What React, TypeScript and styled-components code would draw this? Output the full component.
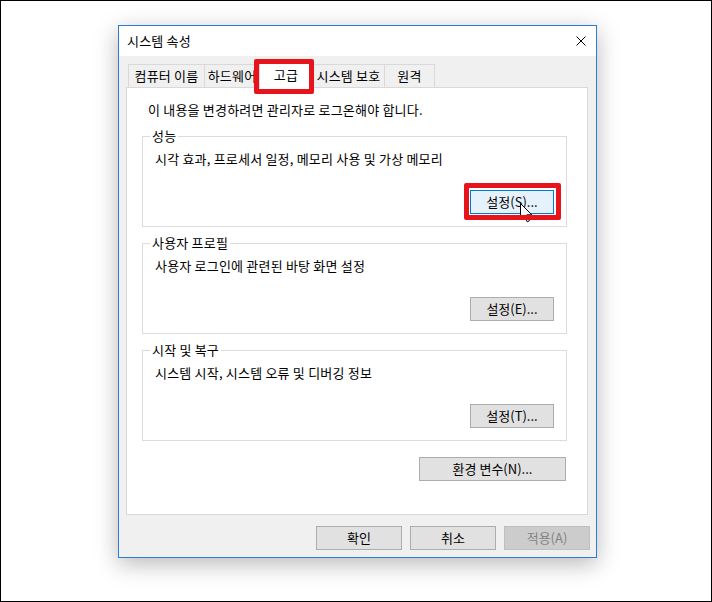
import React from "react";
import styled, { createGlobalStyle, css } from "styled-components";

const GlobalStyle = createGlobalStyle`
  html, body { margin: 0; padding: 0; background: #fff; }
  body {
    font-family: "Noto Sans CJK KR", "Noto Sans", sans-serif;
    font-size: 13px;
    letter-spacing: 0.2px;
    color: #000;
  }
`;

const Stage = styled.div`
  width: 712px;
  height: 602px;
  box-sizing: border-box;
  border: 1px solid #000;
  background: #fff;
  padding: 24px 0 0 117px;
  display: flex;
  align-items: flex-start;
`;

const Window = styled.div`
  width: 479px;
  height: 533px;
  box-sizing: border-box;
  border: 1px solid #2b7cd3;
  display: flex;
  flex-direction: column;
  box-shadow: 0 6px 22px rgba(0, 0, 0, 0.28);
`;

const TitleBar = styled.div`
  height: 30px;
  flex: none;
  background: #fff;
  display: flex;
  align-items: center;
  justify-content: space-between;
  padding: 0 10px 0 8px;
`;

const Title = styled.span`
  line-height: 16px;
`;

const CloseIcon = styled.svg`
  width: 10px;
  height: 10px;
  display: block;
`;

const Body = styled.div`
  flex: 1;
  background: #f0f0f0;
  padding: 6px 6px 7px 7px;
  display: flex;
  flex-direction: column;
`;

const TabStrip = styled.div`
  display: flex;
  align-items: flex-end;
  height: 25px;
  padding-left: 2px;
`;

const Tab = styled.div<{ $active?: boolean; $w: number }>`
  width: ${(p) => p.$w}px;
  height: 23px;
  box-sizing: border-box;
  border: 1px solid #d9d9d9;
  border-bottom: none;
  background: #f0f0f0;
  margin-right: -1px;
  display: flex;
  align-items: center;
  justify-content: center;
  line-height: 16px;
  white-space: nowrap;
  overflow: hidden;
  position: relative;
  ${(p) =>
    p.$active &&
    css`
      height: 26px;
      background: #fff;
      margin-bottom: -1px;
      padding-bottom: 2px;
      z-index: 1;
      overflow: visible;
      &::after {
        content: "";
        position: absolute;
        left: -6px;
        right: -2px;
        top: -4px;
        bottom: -6px;
        border: 5px solid #e8141c;
        border-radius: 2px;
      }
    `}
`;

const Panel = styled.div`
  width: 462px;
  height: 428px;
  box-sizing: border-box;
  background: #fff;
  border: 1px solid #d9d9d9;
  padding: 14px 20px 0 15px;
  display: flex;
  flex-direction: column;
`;

const Notice = styled.div`
  margin-left: 6px;
  line-height: 16px;
`;

const Groups = styled.div`
  margin-top: 10px;
  display: flex;
  flex-direction: column;
  gap: 8px;
`;

const GroupBox = styled.fieldset`
  margin: 0;
  height: 99px;
  box-sizing: border-box;
  border: 1px solid #dcdcdc;
  padding: 0 12px 12px 7px;
  min-inline-size: 0;
`;

const Legend = styled.legend`
  padding: 0 2px;
  line-height: 16px;
`;

const GroupContent = styled.div`
  height: 70px;
  display: flex;
  flex-direction: column;
`;

const Description = styled.div`
  margin-top: 7px;
  margin-left: 5px;
  line-height: 16px;
`;

const Button = styled.button<{ $hot?: boolean; $w?: number }>`
  width: ${(p) => p.$w ?? 84}px;
  height: 24px;
  box-sizing: border-box;
  margin: 0;
  padding: 0;
  font: inherit;
  letter-spacing: 0;
  line-height: 16px;
  color: #000;
  background: #e1e1e1;
  border: 1px solid #adadad;
  border-radius: 0;
  display: block;
  ${(p) =>
    p.$hot &&
    css`
      background: #e5f1fb;
      border-color: #0078d7;
    `}
  &:disabled {
    background: #cccccc;
    border-color: #bfbfbf;
    color: #838383;
  }
`;

const GroupButton = styled.div`
  margin-top: auto;
  align-self: flex-end;
  position: relative;
`;

const Highlight = styled(GroupButton)`
  &::after {
    content: "";
    position: absolute;
    left: -6px;
    right: -7px;
    top: -7px;
    bottom: -6px;
    border: 5px solid #e8141c;
    border-radius: 2px;
  }
`;

const Cursor = styled.svg`
  position: absolute;
  left: 50px;
  top: 13px;
  width: 13px;
  height: 20px;
`;

const EnvButtonSlot = styled.div`
  margin-top: 16px;
  margin-right: 1px;
  align-self: flex-end;
`;

const ButtonRow = styled.div`
  margin-top: 11px;
  display: flex;
  justify-content: flex-end;
  gap: 8px;
`;

const tabs = [
  { label: "컴퓨터 이름", w: 77 },
  { label: "하드웨어", w: 56 },
  { label: "고급", w: 54, active: true },
  { label: "시스템 보호", w: 73 },
  { label: "원격", w: 51 },
];

export default function App() {
  return (
    <>
      <GlobalStyle />
      <Stage>
        <Window>
          <TitleBar>
            <Title>시스템 속성</Title>
            <CloseIcon viewBox="0 0 10 10">
              <path d="M0.5 0.5 L9.5 9.5 M9.5 0.5 L0.5 9.5" stroke="#000" strokeWidth="1" />
            </CloseIcon>
          </TitleBar>
          <Body>
            <TabStrip>
              {tabs.map((t) => (
                <Tab key={t.label} $w={t.w} $active={t.active}>
                  {t.label}
                </Tab>
              ))}
            </TabStrip>
            <Panel>
              <Notice>이 내용을 변경하려면 관리자로 로그온해야 합니다.</Notice>
              <Groups>
                <GroupBox>
                  <Legend>성능</Legend>
                  <GroupContent>
                    <Description>시각 효과, 프로세서 일정, 메모리 사용 및 가상 메모리</Description>
                    <Highlight>
                      <Button $hot>설정(S)...</Button>
                      <Cursor viewBox="0 0 13 20">
                        <path
                          d="M0.5 0.5 L0.5 16.5 L4.5 12.7 L7.2 18.8 L9.4 17.8 L6.8 11.8 L11.8 11.8 Z"
                          fill="#fff"
                          stroke="#000"
                          strokeWidth="1"
                        />
                      </Cursor>
                    </Highlight>
                  </GroupContent>
                </GroupBox>
                <GroupBox>
                  <Legend>사용자 프로필</Legend>
                  <GroupContent>
                    <Description>사용자 로그인에 관련된 바탕 화면 설정</Description>
                    <GroupButton>
                      <Button>설정(E)...</Button>
                    </GroupButton>
                  </GroupContent>
                </GroupBox>
                <GroupBox>
                  <Legend>시작 및 복구</Legend>
                  <GroupContent>
                    <Description>시스템 시작, 시스템 오류 및 디버깅 정보</Description>
                    <GroupButton>
                      <Button>설정(T)...</Button>
                    </GroupButton>
                  </GroupContent>
                </GroupBox>
              </Groups>
              <EnvButtonSlot>
                <Button $w={147}>환경 변수(N)...</Button>
              </EnvButtonSlot>
            </Panel>
            <ButtonRow>
              <Button $w={86}>확인</Button>
              <Button $w={86}>취소</Button>
              <Button $w={86} disabled>
                적용(A)
              </Button>
            </ButtonRow>
          </Body>
        </Window>
      </Stage>
    </>
  );
}
